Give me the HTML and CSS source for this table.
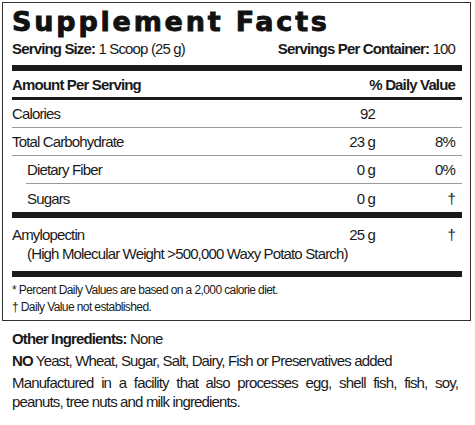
FILE: index.html
```html
<!DOCTYPE html>
<html lang="en">
<head>
  <meta charset="UTF-8">
  <meta name="viewport" content="width=device-width, initial-scale=1.0">
  <title>Supplement Facts</title>
  <link rel="stylesheet" href="styles.css">
</head>
<body>
  <!-- facts panel -->
  <div class="facts">
    <h1 class="title">Supplement Facts</h1>
    <div class="serving">
      <span><b>Serving Size:</b> 1 Scoop (25 g)</span>
      <span><b>Servings Per Container:</b> 100</span>
    </div>
    <div class="bar bar-top"></div>

    <div class="row head">
      <span class="name">Amount Per Serving</span>
      <span class="dv">% Daily Value</span>
    </div>
    <div class="bar bar-mid"></div>

    <div class="row">
      <span class="name">Calories</span>
      <span class="amt">92</span>
      <span class="dv"></span>
    </div>
    <div class="row">
      <span class="name">Total Carbohydrate</span>
      <span class="amt">23 g</span>
      <span class="dv">8%</span>
    </div>
    <div class="row sub">
      <span class="name">Dietary Fiber</span>
      <span class="amt">0 g</span>
      <span class="dv">0%</span>
    </div>
    <div class="row sub last">
      <span class="name">Sugars</span>
      <span class="amt">0 g</span>
      <span class="dv">&dagger;</span>
    </div>
    <div class="bar bar-thick"></div>

    <div class="row multi last">
      <span class="name">Amylopectin<br><span class="note">(High Molecular Weight &gt;500,000 Waxy Potato Starch)</span></span>
      <span class="amt">25 g</span>
      <span class="dv">&dagger;</span>
    </div>
    <div class="bar bar-thick"></div>

    <div class="foot">
      <p>* Percent Daily Values are based on a 2,000 calorie diet.</p>
      <p>&dagger; Daily Value not established.</p>
    </div>
  </div>

  <!-- below the panel -->
  <div class="other">
    <p><b>Other Ingredients:</b> None</p>
    <p><b>NO</b> Yeast, Wheat, Sugar, Salt, Dairy, Fish or Preservatives added</p>
    <p class="justify">Manufactured in a facility that also processes egg, shell fish, fish, soy, peanuts, tree nuts and milk ingredients.</p>
  </div>
</body>
</html>
```

FILE: styles.css
```css
/* page */
body {
  margin: 0;
  background: #fff;
  color: #1a1a1a;
  font-family: "Liberation Sans", Arial, sans-serif;
  font-size: 15px;
  letter-spacing: -0.85px;
}

p {
  margin: 0;
}

/* panel */
.facts {
  margin: 2px 4px 0 2px;
  border: 1.5px solid #333;
  padding: 0 8px 4px 9px;
}

.title {
  margin: 3px 0 0;
  font-family: "DejaVu Sans", sans-serif;
  font-weight: 900;
  font-size: 27px;
  line-height: 32px;
  letter-spacing: 2.8px;
  color: #111;
  -webkit-text-stroke: 0.9px #111;
}

.serving {
  display: flex;
  justify-content: space-between;
  padding: 2px 7px 0 0;
  line-height: 18px;
}

.bar {
  background: #1a1a1a;
}

.bar-top {
  height: 6px;
  margin-top: 7px;
}

.bar-thick {
  height: 6px;
}

.bar-mid {
  height: 3px;
}

.row {
  display: grid;
  grid-template-columns: 1fr auto 80px;
  align-items: center;
  height: 27px;
  padding-right: 7px;
  border-bottom: 1px solid #9a9a9a;
}

.row .amt,
.row .dv {
  text-align: right;
}

.row.head {
  grid-template-columns: 1fr auto;
  height: 26px;
  font-weight: bold;
  border-bottom: none;
}

.row.sub {
  margin-left: 14px;
}

.row.sub .name {
  padding-left: 1px;
}

.row.last {
  height: 28px;
  border-bottom: none;
}

.row.multi {
  height: auto;
  align-items: start;
  padding: 7px 7px 8px 0;
  line-height: 19px;
}

.note {
  display: inline-block;
  padding-left: 15px;
}

.foot {
  padding-top: 5px;
  font-size: 12px;
  letter-spacing: -0.6px;
  line-height: 17px;
}

/* ingredients */
.other {
  padding: 8px 17px 0 12px;
  line-height: 19px;
}

.other p {
  margin-bottom: 3px;
}

.justify {
  text-align: justify;
}
```
